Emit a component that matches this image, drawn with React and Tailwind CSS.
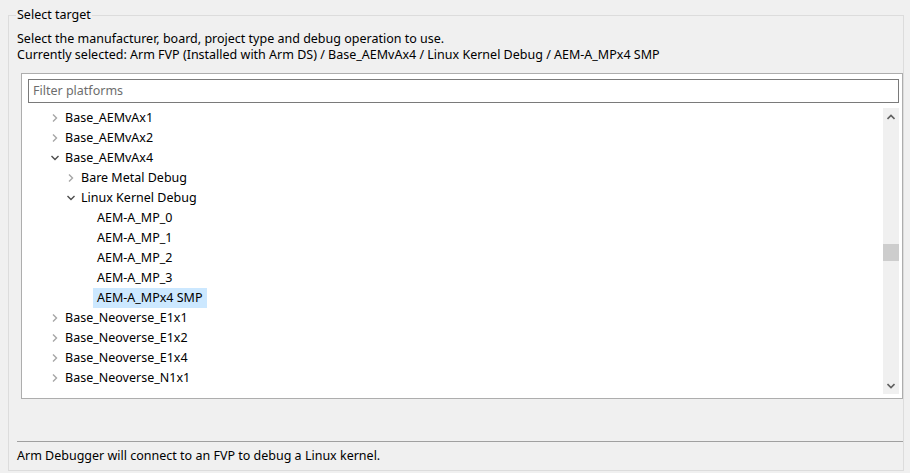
const rows = [
  { label: 'Base_AEMvAx1', level: 0, state: 'closed' },
  { label: 'Base_AEMvAx2', level: 0, state: 'closed' },
  { label: 'Base_AEMvAx4', level: 0, state: 'open' },
  { label: 'Bare Metal Debug', level: 1, state: 'closed' },
  { label: 'Linux Kernel Debug', level: 1, state: 'open' },
  { label: 'AEM-A_MP_0', level: 2 },
  { label: 'AEM-A_MP_1', level: 2 },
  { label: 'AEM-A_MP_2', level: 2 },
  { label: 'AEM-A_MP_3', level: 2 },
  { label: 'AEM-A_MPx4 SMP', level: 2, selected: true },
  { label: 'Base_Neoverse_E1x1', level: 0, state: 'closed' },
  { label: 'Base_Neoverse_E1x2', level: 0, state: 'closed' },
  { label: 'Base_Neoverse_E1x4', level: 0, state: 'closed' },
  { label: 'Base_Neoverse_N1x1', level: 0, state: 'closed' },
];

const indent = ['pl-[28px]', 'pl-[44px]', 'pl-[75px]'];

const Chevron = ({ open }) =>
  open ? (
    <svg width="10" height="10" viewBox="0 0 10 10" className="mr-[5px]">
      <path d="M1.5 3 L5 6.5 L8.5 3" fill="none" stroke="#4d4d4d" strokeWidth="1.4" />
    </svg>
  ) : (
    <svg width="10" height="10" viewBox="0 0 10 10" className="mr-[5px]">
      <path d="M3 1.5 L6.5 5 L3 8.5" fill="none" stroke="#a6a6a6" strokeWidth="1.4" />
    </svg>
  );

const TreeRow = ({ row }) => (
  <div className={`flex h-5 items-center ${indent[row.level]}`}>
    {row.state && <Chevron open={row.state === 'open'} />}
    <span
      className={`h-5 leading-5 px-1 -ml-1 ${row.selected ? 'bg-[#cce8ff]' : ''}`}
    >
      {row.label}
    </span>
  </div>
);

const ArrowUp = () => (
  <svg width="8" height="6" viewBox="0 0 8 6">
    <path d="M0.5 5 L4 1.5 L7.5 5" fill="none" stroke="#606060" strokeWidth="1.6" />
  </svg>
);

const ArrowDown = () => (
  <svg width="8" height="6" viewBox="0 0 8 6">
    <path d="M0.5 1 L4 4.5 L7.5 1" fill="none" stroke="#606060" strokeWidth="1.6" />
  </svg>
);

export default function App() {
  return (
    <div className="w-[910px] h-[473px] bg-[#f0f0f0] overflow-hidden pt-[7px] text-[12.5px] leading-4 text-black font-['Noto_Sans','Noto_Sans_CJK_SC',sans-serif]">
      <fieldset className="ml-2 w-[896px] h-[464px] border border-[#dcdcdc] px-2 flex flex-col">
        <legend className="px-[1px] -ml-[1px] leading-4">Select target</legend>
        <p className="mt-[8px]">Select the manufacturer, board, project type and debug operation to use.</p>
        <p>Currently selected: Arm FVP (Installed with Arm DS) / Base_AEMvAx4 / Linux Kernel Debug / AEM-A_MPx4 SMP</p>

        {/* tree panel */}
        <div className="mt-[10px] ml-1 -mr-2 h-[326px] bg-white border border-[#adadad] flex flex-col pl-[6px] pr-[3px] pt-[5px]">
          <div className="h-6 border border-[#7a7a7a] flex items-center px-[4px] text-[#6d6d6d]">
            Filter platforms
          </div>
          <div className="flex flex-1 mt-[5px] mb-[4px]">
            <div className="flex-1 -ml-[6px]">
              {rows.map((r) => (
                <TreeRow key={r.label} row={r} />
              ))}
            </div>
            <div className="w-4 bg-[#f0f0f0] flex flex-col items-center">
              <div className="h-[17px] flex items-center justify-center">
                <ArrowUp />
              </div>
              <div className="flex-1 w-full pt-[119px]">
                <div className="h-[17px] w-full bg-[#cdcdcd]" />
              </div>
              <div className="h-[17px] flex items-center justify-center">
                <ArrowDown />
              </div>
            </div>
          </div>
        </div>

        <div className="mt-[42px] border-t border-[#a0a0a0] -mr-2" />
        <p className="mt-[6px]">Arm Debugger will connect to an FVP to debug a Linux kernel.</p>
      </fieldset>
    </div>
  );
}
